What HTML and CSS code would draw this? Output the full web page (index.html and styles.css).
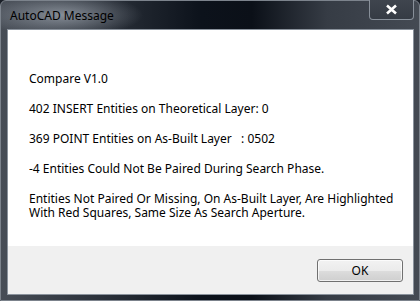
FILE: index.html
```html
<!DOCTYPE html>
<html>
<head>
<meta charset="utf-8">
<link rel="stylesheet" href="styles.css">
</head>
<body>
<div class="window">
  <div class="titlebar">
    <span class="title">AutoCAD Message</span>
    <div class="close" aria-label="Close">
      <svg width="13" height="11" viewBox="0 0 13 11"><path d="M2 1.5 L11 9.5 M11 1.5 L2 9.5" stroke="#fff" stroke-width="2.6" stroke-linecap="butt"/></svg>
    </div>
  </div>
  <div class="client">
    <div class="content">
      <p>Compare V1.0</p>
      <p>402 INSERT Entities on Theoretical Layer: 0</p>
      <p class="pre">369 POINT Entities on As-Built Layer   : 0502</p>
      <p>-4 Entities Could Not Be Paired During Search Phase.</p>
      <p>Entities Not Paired Or Missing, On As-Built Layer, Are Highlighted<br>With Red Squares, Same Size As Search Aperture.</p>
    </div>
    <div class="footer">
      <button class="btn">OK</button>
    </div>
  </div>
</div>
</body>
</html>
```
FILE: styles.css
```css
html, body {
  margin: 0;
  padding: 0;
  background: #1a1f27;
}
.window {
  width: 420px;
  height: 301px;
  box-sizing: border-box;
  display: flex;
  flex-direction: column;
  border: 1px solid #7c838c;
  border-radius: 6px 6px 0 0;
  background:
    radial-gradient(ellipse 80px 22px at 62px 14px, rgba(200,208,218,0.55), rgba(200,208,218,0) 100%),
    linear-gradient(to right, #474d56 0%, #2a3039 25%, #0c121b 48%, #0b1018 60%, #363c45 78%, #444a53 100%);
  padding: 0 5px 5px 6px;
  font-family: "Segoe UI", "Noto Sans", "DejaVu Sans", sans-serif;
}
.titlebar {
  height: 28px;
  display: flex;
  align-items: flex-start;
  justify-content: space-between;
}
.title {
  font-size: 12px;
  color: #000;
  margin-left: 3px;
  margin-top: 7px;
  line-height: 15px;
}
.close {
  width: 45px;
  height: 20px;
  margin-top: -1px;
  box-sizing: border-box;
  border: 1px solid rgba(170,178,188,0.7);
  border-top: none;
  border-radius: 0 0 4px 4px;
  display: flex;
  align-items: center;
  justify-content: center;
  background: linear-gradient(#3f454e, #353b44);
}
.client {
  flex: 1;
  display: flex;
  flex-direction: column;
  border: 1px solid #8a929c;
  background: #fff;
}
.content {
  flex: 1;
  padding: 42px 0 0 21px;
  font-size: 12px;
  line-height: 14px;
  color: #000;
}
.content p {
  margin: 0 0 16px 0;
}
.content .pre {
  white-space: pre;
}
.footer {
  height: 48px;
  background: #f0f0f0;
  display: flex;
  justify-content: flex-end;
  align-items: flex-start;
  padding: 13px 10px 0 0;
  box-sizing: border-box;
}
.btn {
  width: 86px;
  height: 23px;
  border: 1px solid #707070;
  border-radius: 3px;
  background: linear-gradient(#f2f2f2 0%, #ebebeb 50%, #dddddd 50%, #cfcfcf 100%);
  font-family: "Segoe UI", "Noto Sans", "DejaVu Sans", sans-serif;
  font-size: 12px;
  color: #000;
  padding: 0;
  box-shadow: inset 0 0 0 1px rgba(255,255,255,0.7);
}
```
